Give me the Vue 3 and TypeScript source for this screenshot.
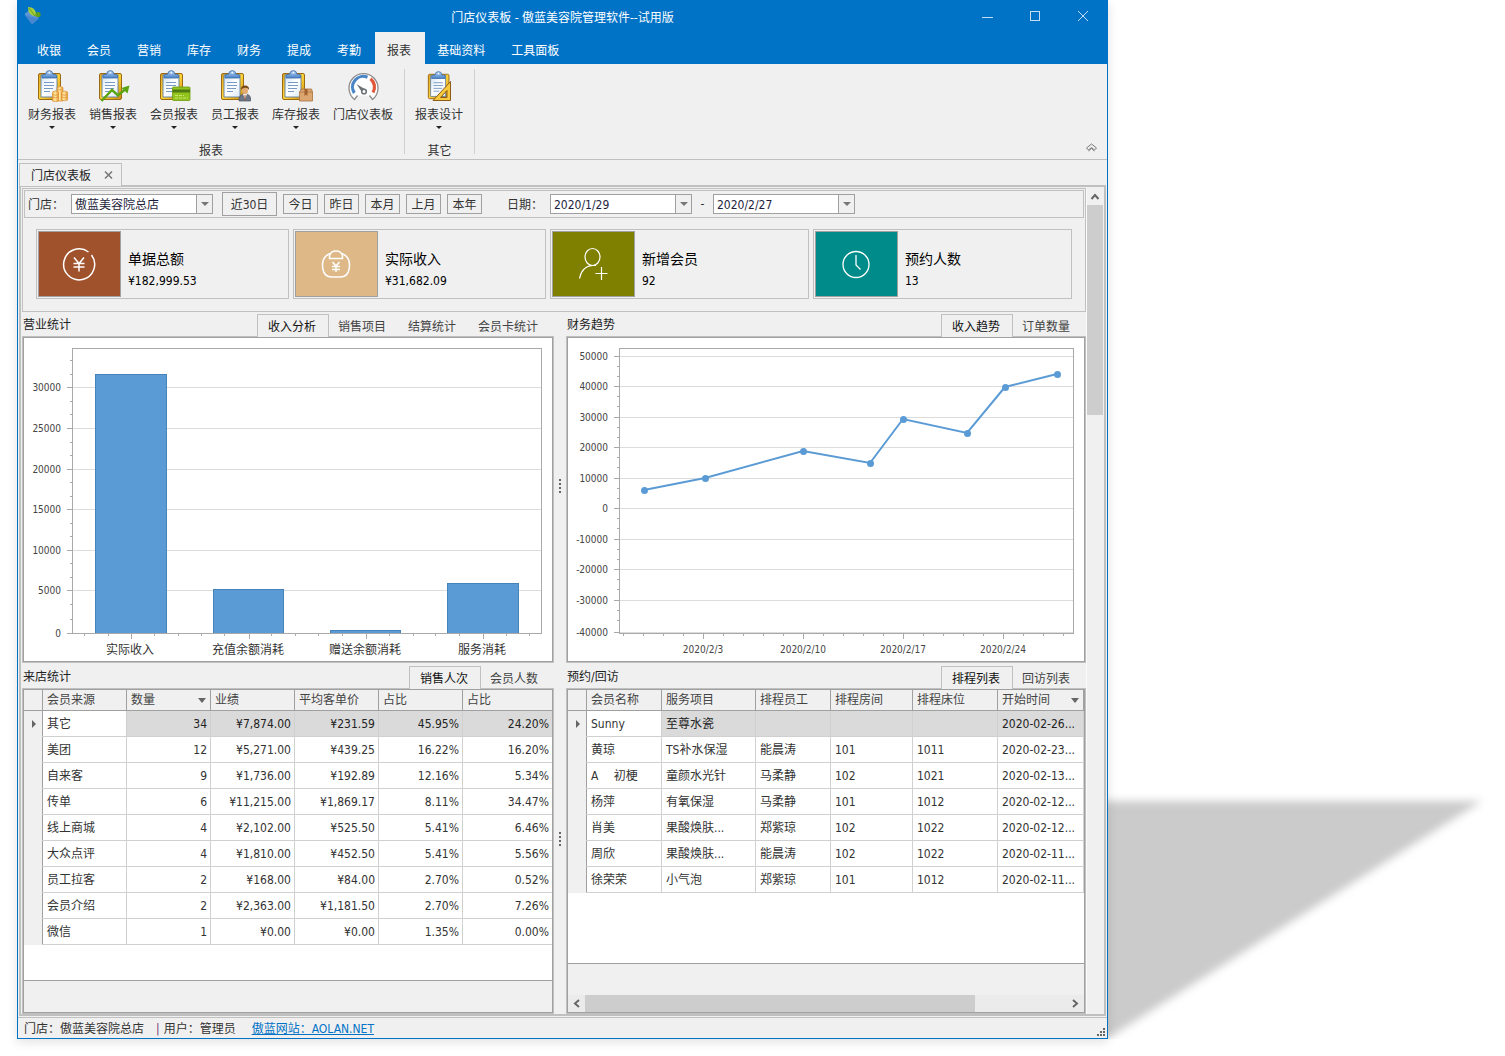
<script setup lang="ts">
import { ref } from 'vue'

interface RibbonItem { label: string; icon: string; arrow: boolean }
interface Card { title: string; value: string; color: string; icon: string }

const menus: string[] = ['收银', '会员', '营销', '库存', '财务', '提成', '考勤', '报表', '基础资料', '工具面板']
const activeMenu = ref('报表')

const groups: { name: string; items: RibbonItem[] }[] = [
  {
    name: '报表',
    items: [
      { label: '财务报表', icon: 'coins', arrow: true },
      { label: '销售报表', icon: 'trend', arrow: true },
      { label: '会员报表', icon: 'card', arrow: true },
      { label: '员工报表', icon: 'person', arrow: true },
      { label: '库存报表', icon: 'box', arrow: true },
      { label: '门店仪表板', icon: 'gauge', arrow: false },
    ],
  },
  { name: '其它', items: [{ label: '报表设计', icon: 'ruler', arrow: true }] },
]

const ranges: string[] = ['近30日', '今日', '昨日', '本月', '上月', '本年']
const shop = ref('傲蓝美容院总店')
const dateFrom = ref('2020/1/29')
const dateTo = ref('2020/2/27')

const cards: Card[] = [
  { title: '单据总额', value: '¥182,999.53', color: '#a0522d', icon: 'yen' },
  { title: '实际收入', value: '¥31,682.09', color: '#deb887', icon: 'bag' },
  { title: '新增会员', value: '92', color: '#808000', icon: 'user' },
  { title: '预约人数', value: '13', color: '#008b8b', icon: 'clock' },
]

const salesTabs: string[] = ['收入分析', '销售项目', '结算统计', '会员卡统计']
const trendTabs: string[] = ['收入趋势', '订单数量']
const visitTabs: string[] = ['销售人次', '会员人数']
const bookTabs: string[] = ['排程列表', '回访列表']

const barGrid = [
  { label: '30000', y: 49 }, { label: '25000', y: 90 }, { label: '20000', y: 131 },
  { label: '15000', y: 171 }, { label: '10000', y: 212 }, { label: '5000', y: 252 },
  { label: '0', y: 295 },
]
const barMinor: number[] = [22, 36, 63, 76, 104, 117, 144, 158, 185, 198, 225, 239, 266, 281]
const barTicks: number[] = [60, 84, 130, 154, 177, 200, 247, 271, 294, 318, 365, 389, 411, 435, 482, 505]
const bars = [
  { label: '实际收入', x: 71, w: 72, top: 36 },
  { label: '充值余额消耗', x: 189, w: 71, top: 251 },
  { label: '赠送余额消耗', x: 306, w: 71, top: 292 },
  { label: '服务消耗', x: 423, w: 72, top: 245 },
]

const lineGrid = [
  { label: '50000', y: 18 }, { label: '40000', y: 48 }, { label: '30000', y: 79 },
  { label: '20000', y: 109 }, { label: '10000', y: 140 }, { label: '0', y: 170 },
  { label: '-10000', y: 201 }, { label: '-20000', y: 231 }, { label: '-30000', y: 262 },
  { label: '-40000', y: 294 },
]
const lineMinor: number[] = lineGrid.slice(0, -1).flatMap((g) => [g.y + 10, g.y + 20])
const lineDates = [
  { label: '2020/2/3', x: 135 }, { label: '2020/2/10', x: 235 },
  { label: '2020/2/17', x: 335 }, { label: '2020/2/24', x: 435 },
]
const lineTicks: number[] = Array.from({ length: 23 }, (_, i) => 55 + i * 20).filter((x) => (x - 35) % 100 !== 0)
const points: [number, number][] = [[76, 152], [137, 140], [235, 113], [302, 125], [335, 81], [399, 95], [437, 49], [489, 36]]
const linePath: string = points.map((p) => p.join(',')).join(' ')

const visitHead: string[] = ['会员来源', '数量', '业绩', '平均客单价', '占比', '占比']
const visitRows: string[][] = [
  ['其它', '34', '¥7,874.00', '¥231.59', '45.95%', '24.20%'],
  ['美团', '12', '¥5,271.00', '¥439.25', '16.22%', '16.20%'],
  ['自来客', '9', '¥1,736.00', '¥192.89', '12.16%', '5.34%'],
  ['传单', '6', '¥11,215.00', '¥1,869.17', '8.11%', '34.47%'],
  ['线上商城', '4', '¥2,102.00', '¥525.50', '5.41%', '6.46%'],
  ['大众点评', '4', '¥1,810.00', '¥452.50', '5.41%', '5.56%'],
  ['员工拉客', '2', '¥168.00', '¥84.00', '2.70%', '0.52%'],
  ['会员介绍', '2', '¥2,363.00', '¥1,181.50', '2.70%', '7.26%'],
  ['微信', '1', '¥0.00', '¥0.00', '1.35%', '0.00%'],
]

const bookHead: string[] = ['会员名称', '服务项目', '排程员工', '排程房间', '排程床位', '开始时间']
const bookRows: string[][] = [
  ['Sunny', '至尊水瓷', '', '', '', '2020-02-26...'],
  ['黄琼', 'TS补水保湿', '能晨涛', '101', '1011', '2020-02-23...'],
  ['A\u3000 初梗', '童颜水光针', '马柔静', '102', '1021', '2020-02-13...'],
  ['杨萍', '有氧保湿', '马柔静', '101', '1012', '2020-02-12...'],
  ['肖美', '果酸焕肤...', '郑紫琼', '102', '1022', '2020-02-12...'],
  ['周欣', '果酸焕肤...', '能晨涛', '102', '1022', '2020-02-11...'],
  ['徐荣荣', '小气泡', '郑紫琼', '101', '1012', '2020-02-11...'],
]
</script>

<template>
  <div class="desktop">
    <svg class="defs" width="0" height="0" aria-hidden="true">
      <defs>
        <linearGradient id="gold" x1="0" y1="0" x2="1" y2="1">
          <stop offset="0" stop-color="#e0a51c" /><stop offset="0.5" stop-color="#ffd53a" /><stop offset="1" stop-color="#c98a0c" />
        </linearGradient>
        <linearGradient id="paper" x1="0" y1="0" x2="1" y2="1">
          <stop offset="0" stop-color="#cfe2f5" /><stop offset="0.5" stop-color="#ffffff" /><stop offset="1" stop-color="#dbe8f6" />
        </linearGradient>
        <linearGradient id="clip" x1="0" y1="0" x2="0" y2="1">
          <stop offset="0" stop-color="#b4d2f3" /><stop offset="1" stop-color="#4a82c8" />
        </linearGradient>
        <linearGradient id="coin" x1="0" y1="0" x2="1" y2="0">
          <stop offset="0" stop-color="#f3b04a" /><stop offset="0.4" stop-color="#ffe9a4" /><stop offset="1" stop-color="#ee9c38" />
        </linearGradient>
        <symbol id="board" viewBox="0 0 34 32">
          <rect x="3.5" y="3.5" width="22" height="26" rx="1.5" fill="url(#gold)" stroke="#9b6a12" />
          <rect x="6" y="5" width="16" height="22" fill="url(#paper)" stroke="#51749f" stroke-width="0.8" />
          <path d="M9 12.5h10M9 15.5h10M9 18.5h9M9 21.5h6" stroke="#7799c4" stroke-width="1" />
          <path d="M7 8V6Q7 4.500 9 4.300H10.500Q11 .6 14.300 .6T18 4.300H19.500Q21.500 4.500 21.500 6V8Z" fill="url(#clip)" stroke="#3b6ca8" stroke-width="0.8" />
          <circle cx="14.300" cy="2.800" r="1" fill="#e9f3ff" />
        </symbol>
      </defs>
    </svg>

    <div class="stage">
      <svg class="cast" viewBox="0 0 400 260" aria-hidden="true">
        <defs><filter id="soft" x="-10%" y="-10%" width="120%" height="120%"><feGaussianBlur stdDeviation="4" /></filter></defs>
        <path d="M-20 22H374L2 258H-20Z" fill="#cbcbcb" filter="url(#soft)" />
      </svg>

      <main class="window">
        <header class="chrome">
          <div class="titlebar">
            <svg class="logo" width="18" height="18" viewBox="0 0 18 18" aria-hidden="true">
              <path d="M1 8Q0 7 1.500 6L6 3L14 10Q15 11 14 12L9 16.500Q8 17 7 16Z" fill="#5c95d6" />
              <path d="M1 8L7 10L14 11L8 17Z" fill="#4a86cf" />
              <path d="M4 0Q12 0 12 8Q12 10 10 9Q4 8 4 0Z" fill="#a5cf3c" />
              <path d="M5 1L11 9" stroke="#6f9d1c" />
              <circle cx="14" cy="7.500" r="2.600" fill="#5f9f1c" />
            </svg>
            <h1>门店仪表板 - 傲蓝美容院管理软件--试用版</h1>
            <div class="controls">
              <button type="button" aria-label="最小化"><svg width="12" height="12"><path d="M1 7.500h11" /></svg></button>
              <button type="button" aria-label="最大化"><svg width="12" height="12"><path d="M1.500 1.500h9v9h-9z" /></svg></button>
              <button type="button" aria-label="关闭"><svg width="12" height="12"><path d="M1 1l10 10M11 1L1 11" shape-rendering="auto" /></svg></button>
            </div>
          </div>
          <nav class="menu">
            <button v-for="m in menus" :key="m" type="button" :class="{ on: m === activeMenu }" @click="activeMenu = m">{{ m }}</button>
          </nav>
        </header>

        <section class="ribbon">
          <div v-for="g in groups" :key="g.name" class="group">
            <div class="tools">
              <button v-for="it in g.items" :key="it.label" type="button" class="tool">
                <svg width="34" height="32" viewBox="0 0 34 32" aria-hidden="true">
                  <template v-if="it.icon === 'gauge'">
                    <path d="M9 30A14.500 14.500 0 1 1 26 30L23.500 25.500H11.500Z" fill="#fff" />
                    <path d="M11.500 25.500L8.500 29.500A14.500 14.500 0 1 1 26.500 29.500L23.500 25.500" fill="none" stroke="#8c8c8c" stroke-width="1.300" />
                    <path d="M8.300 23A10.700 10.700 0 0 1 21.500 7.300" fill="none" stroke="#4a86c5" stroke-width="3.200" />
                    <path d="M24.500 8.700A10.700 10.700 0 0 1 27 22.500" fill="none" stroke="#e0583a" stroke-width="3.200" />
                    <path d="M10.500 14L19.500 19.500L16.500 23Z" fill="#6c7176" />
                    <circle cx="18" cy="21.500" r="2.300" fill="#fff" stroke="#6c7176" stroke-width="1.600" />
                  </template>
                  <use v-else-if="it.icon === 'ruler'" href="#board" x="3" y="1" width="32" height="30" />
                  <use v-else href="#board" width="34" height="32" />
                  <g v-if="it.icon === 'coins'" fill="url(#coin)" stroke="#d98f35" stroke-width="0.700">
                    <path d="M22 17.500q3.500-2 6 0V31h-6z" /><path d="M17.500 22q3-2 6 0v9q-3 1.500-6 0z" /><path d="M26.500 22q3-2 6 0v8q-3 1.500-6 0z" />
                    <path d="M17.500 24.500q3 1.500 6 0M17.500 27q3 1.500 6 0M26.500 24.500q3 1.500 6 0M26.500 27q3 1.500 6 0M22 19.500q3 1 6 0" fill="none" />
                  </g>
                  <g v-if="it.icon === 'trend'">
                    <path d="M5.500 31L16 20L22 25.500L29.500 19" fill="none" stroke="#5aa511" stroke-width="2.400" />
                    <path d="M25.500 18L33.500 15.500L31.500 23.500Z" fill="#5aa511" />
                  </g>
                  <g v-if="it.icon === 'card'">
                    <rect x="15.500" y="17" width="17.500" height="13.500" rx="1" fill="#92c41c" stroke="#6c9a10" stroke-width="0.800" />
                    <rect x="15.500" y="19.500" width="17.500" height="3" fill="#4f7a12" />
                    <path d="M18 25.500h9M18 28h13" stroke="#c9e573" stroke-dasharray="3 1" />
                  </g>
                  <g v-if="it.icon === 'person'">
                    <path d="M21 31q-.5-7 6-7t5.500 7z" fill="#6d7786" stroke="#4a5362" stroke-width="0.700" />
                    <path d="M25 24l2 5 2-5z" fill="#fff" /><path d="M26.500 25h1v5h-1z" fill="#a9502d" />
                    <ellipse cx="27" cy="20.500" rx="3" ry="3.800" fill="#e2ab73" />
                    <path d="M23 20q-.5-4.500 4-4.500t4 4.500q-1-2.500-4-2.300T23 20z" fill="#7a4a18" />
                  </g>
                  <g v-if="it.icon === 'box'">
                    <path d="M20.500 22l2-3h10l1 3v9h-13z" fill="#dba670" stroke="#a9713c" stroke-width="0.800" />
                    <path d="M20.500 22h13" stroke="#b57f49" /><path d="M25.500 19h3v7l-1.500-1.500-1.500 1.500z" fill="#a3602f" />
                  </g>
                  <path v-if="it.icon === 'ruler'" d="M11 30.500L28.500 11.500V30.500ZM18.500 27.500h6.500v-7z" fill="#f7c93c" fill-rule="evenodd" stroke="#8d5b16" stroke-width="1" />
                </svg>
                <span>{{ it.label }}</span>
                <i v-if="it.arrow" class="down"></i>
              </button>
            </div>
            <p>{{ g.name }}</p>
          </div>
          <button type="button" class="collapse" aria-label="折叠功能区">
            <svg width="13" height="10" viewBox="0 0 13 10"><path d="M1.500 5L6.500 1L11.500 5L9.500 7L6.500 4.500L3.500 7ZM3.500 8L6.500 5.500L9.500 8" /></svg>
          </button>
        </section>

        <div class="doctabs">
          <div class="doctab">
            <span>门店仪表板</span>
            <button type="button" aria-label="关闭标签"><svg width="9" height="8" viewBox="0 0 9 8"><path d="M1 .5L8 7.500M8 .5L1 7.500" /></svg></button>
          </div>
        </div>

        <div class="frame">
          <div class="content">
            <section class="summary">
              <form class="filter" @submit.prevent>
                <label for="shop">门店：</label>
                <span class="combo">
                  <select id="shop" v-model="shop"><option>傲蓝美容院总店</option></select>
                  <i class="drop" aria-hidden="true"></i>
                </span>
                <div class="ranges">
                  <button v-for="(r, i) in ranges" :key="r" type="button" :class="{ wide: i === 0 }">{{ r }}</button>
                </div>
                <label for="from">日期：</label>
                <span class="combo"><input id="from" v-model="dateFrom" type="text" /><button type="button" class="drop" aria-label="选择开始日期"></button></span>
                <span class="dash">-</span>
                <span class="combo"><input v-model="dateTo" type="text" aria-label="结束日期" /><button type="button" class="drop" aria-label="选择结束日期"></button></span>
              </form>
              <div class="cards">
                <article v-for="c in cards" :key="c.title" class="card">
                  <div class="tile" :style="{ background: c.color }">
                    <svg width="36" height="36" viewBox="1 0 36 36" aria-hidden="true">
                      <g v-if="c.icon === 'yen'">
                        <path d="M27.500 6A15.500 15.500 0 1 0 30.500 9" stroke-width="1.500" />
                        <path d="M13 11.500l5 6 5-6M18 17.500v8M12.500 17.500h11M12.500 21h11" stroke-width="1.500" />
                      </g>
                      <g v-if="c.icon === 'bag'" stroke-width="1.500">
                        <path d="M12 7.500Q4.500 10.500 4.500 18.500Q4.500 31 14 31H22Q31.500 31 31.500 18.500Q31.500 10.500 24 7.500" />
                        <path d="M11.500 12.500V10Q12.500 5 18 5T24.500 10V12.500Z" />
                        <path d="M14.500 16l3.500 4 3.500-4M18 20v6M14 20.500h8M14 23.500h8" />
                      </g>
                      <g v-if="c.icon === 'user'" stroke-width="1.200">
                        <ellipse cx="17.500" cy="11" rx="7.500" ry="8.500" /><path d="M4.500 32.500Q7 20 17.500 19.500H21M26.500 21v13M20.500 27.500h12" />
                      </g>
                      <g v-if="c.icon === 'clock'" stroke-width="1.300">
                        <circle cx="18" cy="18.500" r="13" /><path d="M18 9v10l4.500 4.500" />
                      </g>
                    </svg>
                  </div>
                  <div class="figures"><h2>{{ c.title }}</h2><p>{{ c.value }}</p></div>
                </article>
              </div>
            </section>

            <div class="row upper">
              <section class="panel">
                <div class="head">
                  <h3>营业统计</h3>
                  <div class="tabs"><button v-for="(t, i) in salesTabs" :key="t" type="button" :class="{ on: i === 0 }">{{ t }}</button></div>
                </div>
                <div class="pane"><div class="inner">
                  <svg class="chart" viewBox="0 0 528 323" role="img" aria-label="收入分析">
                    <g class="grid"><path v-for="g in barGrid" :key="g.y" :d="`M48.500 ${g.y + .5}H517`" /></g>
                    <g class="axis">
                      <path d="M48.500 10.500H517.500V295.500H48.500Z" />
                      <path v-for="g in barGrid" :key="g.y" :d="`M43 ${g.y + .5}H48`" />
                      <path v-for="y in barMinor" :key="'m' + y" :d="`M46 ${y + .5}H48`" />
                      <path v-for="x in barTicks" :key="'t' + x" :d="`M${x + .5} 296V298`" />
                      <path v-for="b in bars" :key="b.x" :d="`M${b.x + 36.5} 296V301`" />
                    </g>
                    <g class="bars"><path v-for="b in bars" :key="b.x" :d="`M${b.x + .5} 295V${b.top + .5}H${b.x + b.w - .5}V295`" /></g>
                    <g class="num" text-anchor="end"><text v-for="g in barGrid" :key="g.y" x="37" :y="g.y + 4">{{ g.label }}</text></g>
                    <g class="cat" text-anchor="middle"><text v-for="b in bars" :key="b.x" :x="b.x + 35" y="316">{{ b.label }}</text></g>
                  </svg>
                </div></div>
              </section>
              <div class="splitter" aria-hidden="true"><i></i><i></i><i></i><i></i></div>
              <section class="panel">
                <div class="head">
                  <h3>财务趋势</h3>
                  <div class="tabs"><button v-for="(t, i) in trendTabs" :key="t" type="button" :class="{ on: i === 0 }">{{ t }}</button></div>
                </div>
                <div class="pane"><div class="inner">
                  <svg class="chart" viewBox="0 0 516 323" role="img" aria-label="收入趋势">
                    <g class="grid"><path v-for="g in lineGrid" :key="g.y" :d="`M51.500 ${g.y + .5}H505`" /></g>
                    <g class="axis">
                      <path d="M51.500 10.500H505.500V295.500H51.500Z" />
                      <path v-for="g in lineGrid" :key="g.y" :d="`M46 ${g.y + .5}H51`" />
                      <path v-for="y in lineMinor" :key="'m' + y" :d="`M49 ${y + .5}H51`" />
                      <path v-for="x in lineTicks" :key="'t' + x" :d="`M${x + .5} 296V298`" />
                      <path v-for="d in lineDates" :key="d.x" :d="`M${d.x + .5} 296V301`" />
                    </g>
                    <polyline :points="linePath" class="trend" />
                    <circle v-for="p in points" :key="p[0]" :cx="p[0] + .5" :cy="p[1] + .5" r="3.500" fill="#5b9bd5" />
                    <g class="num" text-anchor="end"><text v-for="g in lineGrid" :key="g.y" x="40" :y="g.y + 4">{{ g.label }}</text></g>
                    <g class="num" text-anchor="middle"><text v-for="d in lineDates" :key="d.x" :x="d.x" y="315">{{ d.label }}</text></g>
                  </svg>
                </div></div>
              </section>
            </div>

            <div class="row lower">
              <section class="panel">
                <div class="head">
                  <h3>来店统计</h3>
                  <div class="tabs"><button v-for="(t, i) in visitTabs" :key="t" type="button" :class="{ on: i === 0 }">{{ t }}</button></div>
                </div>
                <div class="pane"><div class="inner">
                  <table class="visit">
                    <colgroup><col class="mark" /><col class="c84" /><col class="c84" /><col class="c84" /><col class="c84" /><col class="c84" /><col /></colgroup>
                    <thead><tr><th></th><th v-for="(h, i) in visitHead" :key="i" scope="col"><span>{{ h }}<i v-if="i === 1" class="sort"></i></span></th></tr></thead>
                    <tbody>
                      <tr v-for="(r, i) in visitRows" :key="i" :class="{ sel: i === 0 }">
                        <td><i v-if="i === 0" class="cur"></i></td>
                        <td v-for="(v, j) in r" :key="j">{{ v }}</td>
                      </tr>
                    </tbody>
                  </table>
                  <div class="foot"></div>
                </div></div>
              </section>
              <div class="splitter" aria-hidden="true"><i></i><i></i><i></i><i></i></div>
              <section class="panel">
                <div class="head">
                  <h3>预约/回访</h3>
                  <div class="tabs"><button v-for="(t, i) in bookTabs" :key="t" type="button" :class="{ on: i === 0 }">{{ t }}</button></div>
                </div>
                <div class="pane"><div class="inner">
                  <table class="book">
                    <colgroup><col class="mark" /><col class="c75" /><col class="c94" /><col class="c75" /><col class="c82" /><col class="c85" /><col /></colgroup>
                    <thead><tr><th></th><th v-for="(h, i) in bookHead" :key="i" scope="col"><span>{{ h }}<i v-if="i === 5" class="sort"></i></span></th></tr></thead>
                    <tbody>
                      <tr v-for="(r, i) in bookRows" :key="i" :class="{ sel: i === 0 }">
                        <td><i v-if="i === 0" class="cur"></i></td>
                        <td v-for="(v, j) in r" :key="j">{{ v }}</td>
                      </tr>
                    </tbody>
                  </table>
                  <div class="foot"></div>
                  <div class="hscroll" aria-hidden="true">
                    <svg width="17" height="17"><path d="M11 5L7 8.500L11 12" /></svg>
                    <div class="track"><div class="thumb"></div></div>
                    <svg width="17" height="17"><path d="M6 5L10 8.500L6 12" /></svg>
                  </div>
                </div></div>
              </section>
            </div>
          </div>
          <div class="vscroll" aria-hidden="true">
            <svg width="16" height="17"><path d="M4.500 11L8 7L11.500 11" /></svg>
            <div class="thumb"></div>
          </div>
        </div>

        <footer class="status">
          <span>门店：傲蓝美容院总店</span><span class="bar">|</span><span>用户：管理员</span>
          <a href="#aolan">傲蓝网站：AOLAN.NET</a>
          <svg class="grip" width="9" height="9" aria-hidden="true"><path d="M6 0h2v2h-2zM3 3h2v2h-2zM6 3h2v2h-2zM0 6h2v2h-2zM3 6h2v2h-2zM6 6h2v2h-2z" /></svg>
        </footer>
      </main>
    </div>
  </div>
</template>

<style>
body { margin: 0; background: #fff; }
</style>

<style scoped>
.desktop {
  padding: 0 397px 18px 17px;
  font: 12px/16px "DejaVu Sans Condensed", "Noto Sans CJK SC", sans-serif;
  color: #333;
  overflow: hidden;
}
.desktop *, .desktop *::before { box-sizing: border-box; }
.defs { position: absolute; }
button, input, select { font: inherit; color: inherit; margin: 0; padding: 0; border: 0; background: none; border-radius: 0; }
h1, h2, h3, p { margin: 0; font: inherit; }
svg { display: block; }
.stage { position: relative; }
.cast { position: absolute; left: 100%; bottom: 0; width: 400px; height: 260px; }
.window {
  position: relative;
  border: 1px solid #0173c7;
  border-top: 0;
  background: #f0f0f0;
  box-shadow: 0 3px 10px rgba(0, 0, 0, 0.12);
}

.chrome { background: #0173c7; color: #fff; }
.titlebar { display: grid; grid-template-columns: 1fr auto 1fr; align-items: center; height: 32px; }
.titlebar h1 { padding-top: 4px; }
.logo { margin-left: 6px; }
.controls { display: flex; justify-content: flex-end; }
.controls button { width: 48px; height: 32px; display: grid; place-items: center; }
.controls path { fill: none; stroke: #c5dcf0; shape-rendering: crispEdges; }
.menu { display: flex; height: 32px; padding-left: 7px; }
.menu button { padding: 5px 14px 0 12px; white-space: nowrap; }
.menu .on { background: #f0f0f0; color: #333; }

.ribbon { display: flex; height: 96px; border-bottom: 1px solid #c0c0c0; }
.group { padding: 6px 1px 0 0; position: relative; }
.group::after { content: ""; position: absolute; right: 0; top: 5px; width: 1px; height: 85px; background: #d0d0d0; }
.tools { display: flex; padding: 0 4px 0 4px; height: 73px; }
.group p { text-align: center; line-height: 16px; }
.tool { display: flex; flex-direction: column; align-items: center; padding: 0 7px 0 6px; white-space: nowrap; }
.tool span { margin-top: 5px; }
.down { border: 3px solid transparent; border-top-color: #222; border-bottom: 0; margin-top: 3px; }
.collapse { margin: auto 9px 6px auto; }
.collapse path { fill: none; stroke: #777; }

.doctabs { height: 25px; padding: 3px 1px 0; }
.doctab { display: inline-flex; align-items: center; height: 23px; border: 1px solid #c0c0c0; border-bottom: 0; padding: 0 8px 0 11px; background: #f0f0f0; position: relative; z-index: 1; color: #222; }
.doctab span { padding-top: 2px; }
.doctab button { margin-left: 13px; }
.doctab path { stroke: #777; stroke-width: 1.500; }

.frame { display: flex; margin: 0 1px; border: 2px solid #c0c0c0; padding: 1px 0 0 1px; }
.content { flex: 1; min-width: 0; }
.summary { border: 1px solid #c0c0c0; padding: 1px 1px 12px; }
.filter { display: flex; align-items: center; height: 28px; border: 1px solid #c0c0c0; padding-left: 3px; white-space: nowrap; }
.filter label { width: 43px; padding-top: 2px; }
.combo { position: relative; width: 142px; height: 20px; border: 1px solid #a0a0a0; background: #fff; display: flex; color: #1e1e3c; }
.combo select { appearance: none; width: 100%; padding: 2px 20px 0 3px; outline: 0; }
.combo input { flex: 1; min-width: 0; padding: 1px 3px 0; }
.drop { width: 16px; background: #f0f0f0; border-left: 1px solid #a0a0a0; display: grid; place-items: center; }
i.drop { position: absolute; right: 0; top: 0; bottom: 0; pointer-events: none; }
.drop::before { content: ""; border: 4px solid transparent; border-top-color: #777; border-bottom: 0; }
.ranges { display: flex; align-items: center; gap: 6px; margin: 0 25px 0 9px; }
.ranges button { width: 35px; height: 20px; border: 1px solid #a0a0a0; padding-top: 2px; line-height: 16px; }
.ranges .wide { width: 55px; height: 24px; }
.dash { width: 21px; text-align: center; }

.cards { display: grid; grid-template-columns: 253fr 253fr 259fr 259fr; gap: 4px; margin: 11px 12px 0; }
.card { display: flex; height: 70px; border: 1px solid #c0c0c0; padding: 1px; }
.tile { width: 83px; border: 1px solid #a0a0a0; display: grid; place-items: center; }
.tile svg { fill: none; stroke: #fff; }
.figures { padding: 17px 0 0 7px; color: #000; }
.figures h2 { font-size: 14px; line-height: 22px; }
.figures p { line-height: 22px; }

.row { display: grid; grid-template-columns: 532fr 12px 520fr; }
.panel { min-width: 0; display: flex; flex-direction: column; }
.head { display: flex; justify-content: space-between; height: 24px; padding: 0 4px 0 1px; }
.lower .head { height: 25px; }
.head h3 { padding-top: 5px; color: #222; white-space: nowrap; }
.lower .head h3 { padding-top: 6px; }
.tabs { display: flex; align-items: flex-end; margin-bottom: -1px; z-index: 1; }
.tabs button { height: 23px; padding: 2px 12px 0 10px; color: #444; white-space: nowrap; }
.tabs .on { border: 1px solid #c0c0c0; border-bottom: 0; margin: 0 -1px; background: #f0f0f0; color: #111; padding-top: 1px; }
.pane { border: 1px solid #c0c0c0; flex: 1; display: flex; }
.inner { border: 1px solid #a0a0a0; background: #fff; flex: 1; min-width: 0; display: flex; flex-direction: column; }
.lower .inner { min-height: 324px; }
.splitter { display: flex; flex-direction: column; justify-content: center; align-items: center; gap: 2px; }
.splitter i { width: 2px; height: 2px; background: #666; }
.upper .splitter { padding-bottom: 4px; }

.chart { width: 100%; height: auto; }
.grid path { stroke: #dcdcdc; shape-rendering: crispEdges; }
.axis path { fill: none; stroke: #a9a9a9; shape-rendering: crispEdges; }
.bars path { fill: #5b9bd5; stroke: #4683b9; shape-rendering: crispEdges; }
.trend { fill: none; stroke: #5b9bd5; stroke-width: 2; }
.num { font-size: 10px; fill: #444; }
.cat { font-size: 12px; fill: #333; }

table { width: 100%; table-layout: fixed; border-collapse: separate; border-spacing: 0; }
.mark { width: 19px; }
.c75 { width: 75px; }
.c82 { width: 82px; }
.c84 { width: 84px; }
.c85 { width: 85px; }
.c94 { width: 94px; }
th { height: 21px; padding: 0 4px; background: #f0f0f0; border-right: 1px solid #a0a0a0; border-bottom: 1px solid #a0a0a0; font-weight: 400; text-align: left; line-height: 16px; white-space: nowrap; color: #444; }
th span { display: flex; align-items: center; justify-content: space-between; }
td { height: 26px; padding: 0 4px; border-right: 1px solid #d0d0d0; border-bottom: 1px solid #d0d0d0; line-height: 16px; white-space: pre; overflow: hidden; }
td:first-child { background: #f0f0f0; border-right-color: #a0a0a0; border-bottom-color: #f0f0f0; padding: 0 5px; }
.visit td:nth-child(n + 3) { text-align: right; padding-right: 3px; }
.visit th:last-child, .visit td:last-child { border-right: 0; }
.sel td:nth-child(n + 3) { background: #dadada; color: #222; }
.sort { border: 4px solid transparent; border-top: 5px solid #666; border-bottom: 0; }
.cur { display: block; width: 0; margin-left: 3px; border: 4px solid transparent; border-left-color: #666; border-right: 0; }
.foot { margin-top: auto; height: 32px; border-top: 1px solid #a0a0a0; background: #f0f0f0; }
.hscroll { display: flex; height: 17px; background: #ebebeb; }
.hscroll .track { flex: 1; display: flex; }
.hscroll .thumb { width: 81%; background: #cdcdcd; }
.hscroll path, .vscroll path { fill: none; stroke: #666; stroke-width: 2; }
.vscroll { width: 18px; border-left: 1px solid #fafafa; }
.vscroll .thumb { width: 16px; height: 210px; background: #cdcdcd; }

.status { display: flex; align-items: center; height: 21px; border-top: 1px solid #c0c0c0; margin-top: 1px; padding: 2px 1px 0 6px; white-space: nowrap; }
.bar { margin: 0 4px 0 12px; color: #7a3070; }
.status a { margin-left: 16px; color: #0173c7; }
.grip { margin: auto 0 1px auto; fill: #666; }
</style>
